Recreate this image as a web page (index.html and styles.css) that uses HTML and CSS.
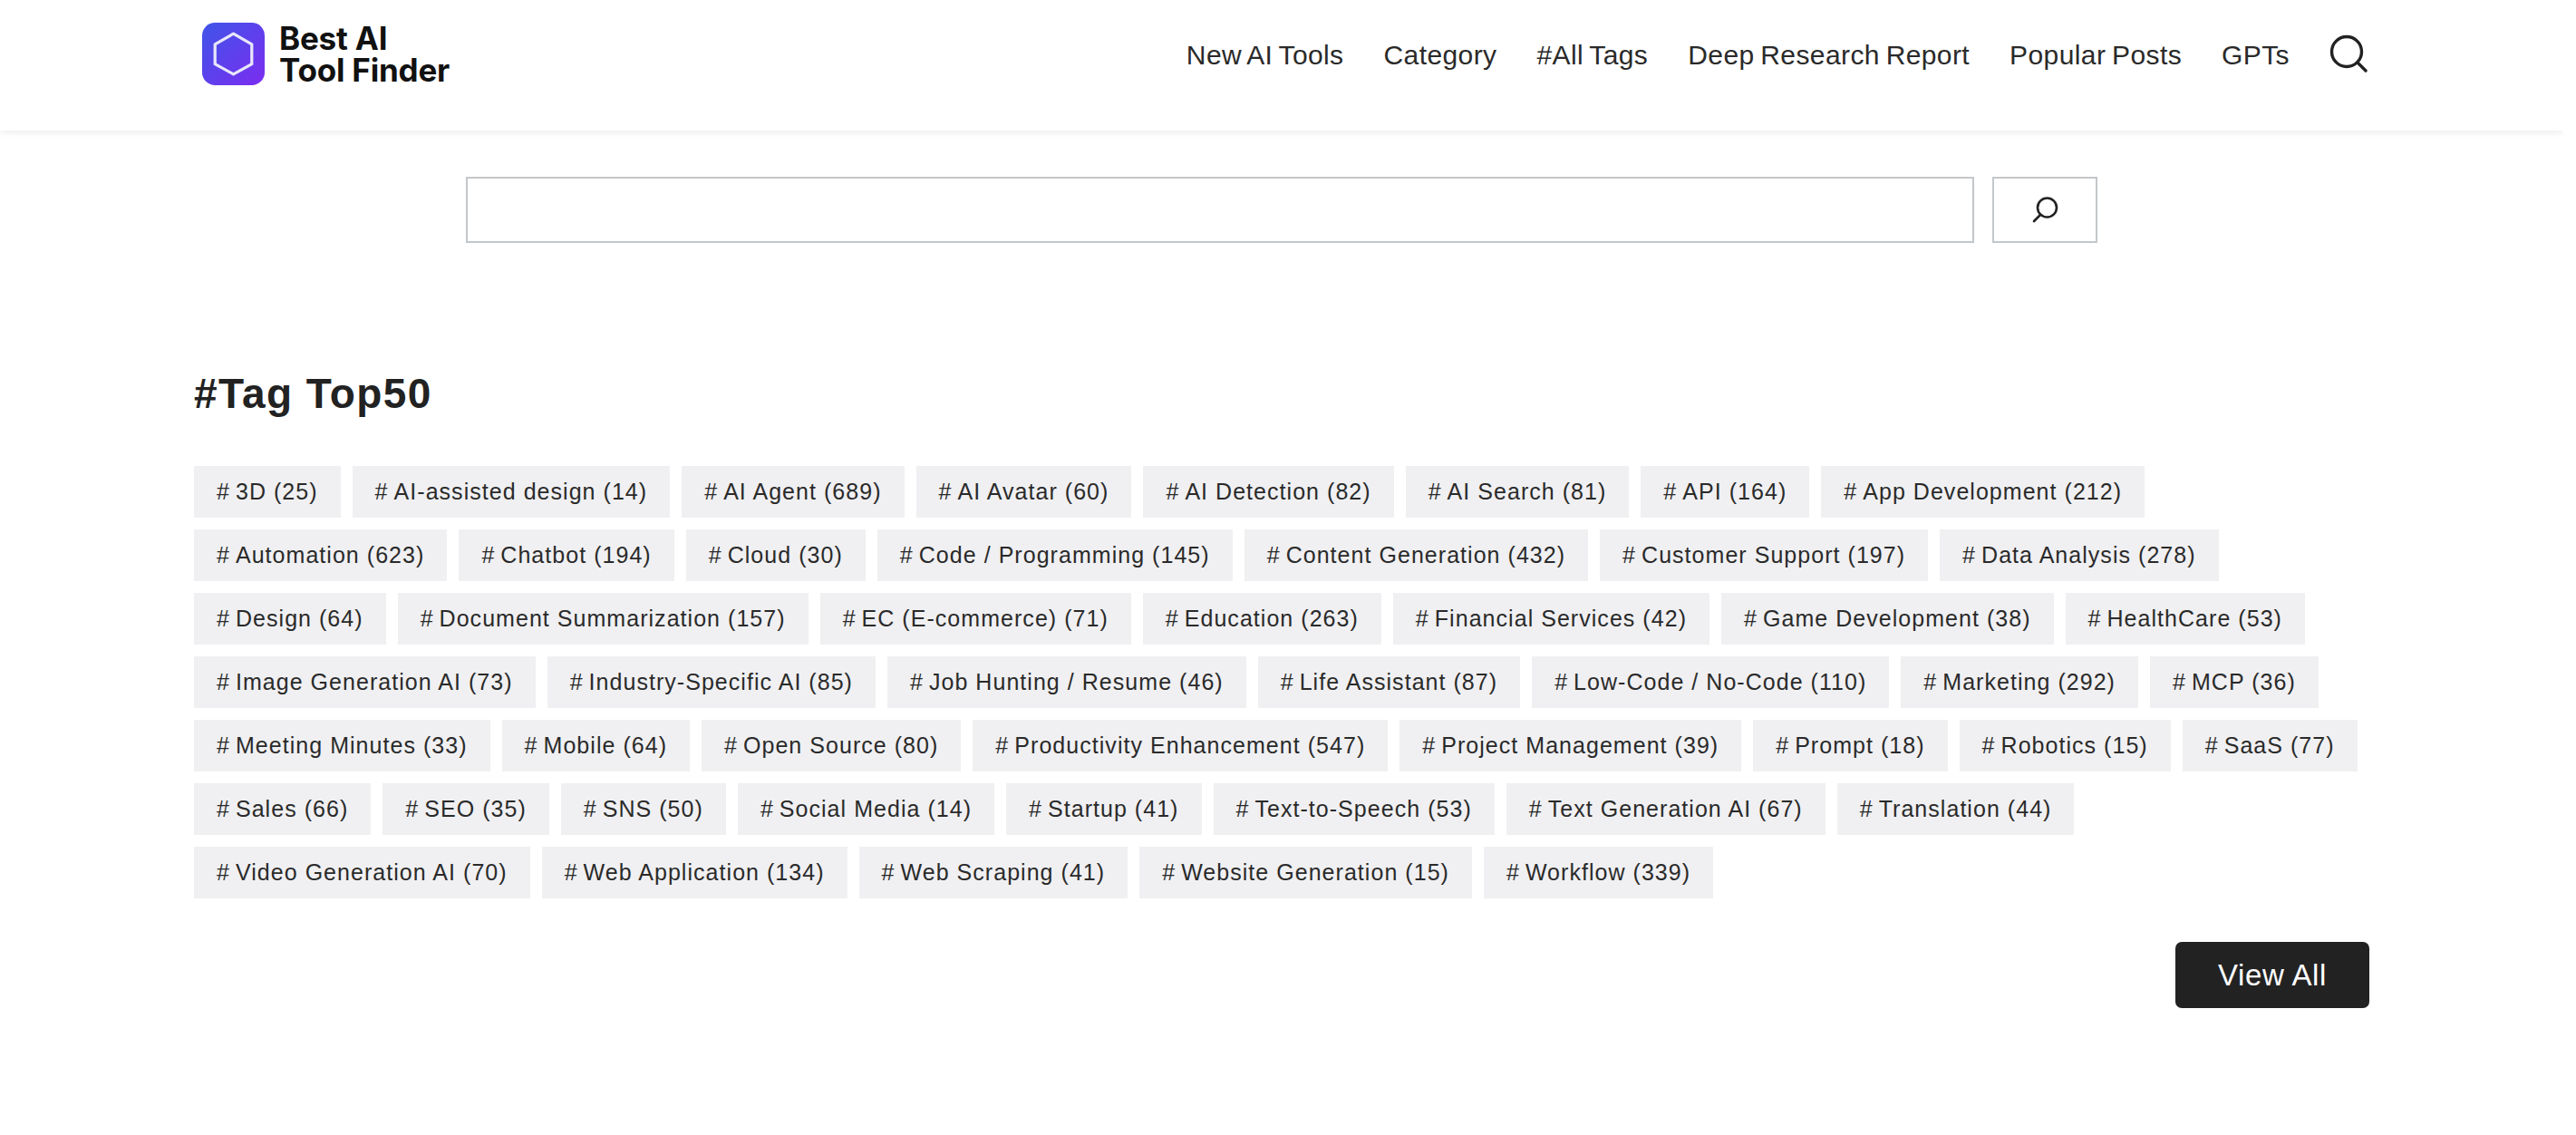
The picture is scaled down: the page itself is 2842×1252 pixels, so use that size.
FILE: index.html
```html
<!DOCTYPE html>
<html lang="en">
<head>
<meta charset="utf-8">
<title>Best AI Tool Finder</title>
<link rel="stylesheet" href="styles.css">
</head>
<body>
<header class="site-header">
  <div class="header-inner">
    <a class="logo" href="#">
      <svg class="logo-icon" viewBox="0 0 68 68" aria-hidden="true">
        <defs><linearGradient id="lg" x1="0" y1="0" x2="1" y2="1"><stop offset="0" stop-color="#3f55e8"/><stop offset="1" stop-color="#7c2cf0"/></linearGradient></defs>
        <rect width="68" height="68" rx="14" fill="url(#lg)"/>
        <path d="M34 12 L54 23.5 V45 L34 56 L14 45 V23.5 Z" fill="none" stroke="#e8e6fb" stroke-width="3.2" stroke-linejoin="round"/>
      </svg>
      <span class="logo-text">Best AI<br>Tool Finder</span>
    </a>
    <nav class="main-nav">
      <a href="#">New AI Tools</a>
      <a href="#">Category</a>
      <a href="#">#All Tags</a>
      <a href="#">Deep Research Report</a>
      <a href="#">Popular Posts</a>
      <a href="#">GPTs</a>
      <svg class="nav-search" viewBox="0 0 42 42" aria-hidden="true"><circle cx="19" cy="19" r="16.5" fill="none" stroke="#222" stroke-width="3.4"/><path d="M31 31 L40 40" stroke="#222" stroke-width="3.4" stroke-linecap="round"/></svg>
    </nav>
  </div>
</header>
<main class="content">
  <form class="search-form">
    <input class="search-input" type="text" aria-label="Search">
    <button class="search-btn" type="button" aria-label="Search">
      <svg viewBox="0 0 30 30" class="search-btn-icon" aria-hidden="true"><circle cx="17.5" cy="12" r="10.5" fill="none" stroke="#222" stroke-width="2.6"/><path d="M10 20 L3 27" stroke="#222" stroke-width="2.6" stroke-linecap="round"/></svg>
    </button>
  </form>
  <section class="tags-section">
    <h2 class="section-title">#Tag Top50</h2>
    <ul class="tag-list">
      <li class="tag"><span class="hash">#</span>3D (25)</li>
      <li class="tag"><span class="hash">#</span>AI-assisted design (14)</li>
      <li class="tag"><span class="hash">#</span>AI Agent (689)</li>
      <li class="tag"><span class="hash">#</span>AI Avatar (60)</li>
      <li class="tag"><span class="hash">#</span>AI Detection (82)</li>
      <li class="tag"><span class="hash">#</span>AI Search (81)</li>
      <li class="tag"><span class="hash">#</span>API (164)</li>
      <li class="tag"><span class="hash">#</span>App Development (212)</li>
      <li class="tag"><span class="hash">#</span>Automation (623)</li>
      <li class="tag"><span class="hash">#</span>Chatbot (194)</li>
      <li class="tag"><span class="hash">#</span>Cloud (30)</li>
      <li class="tag"><span class="hash">#</span>Code / Programming (145)</li>
      <li class="tag"><span class="hash">#</span>Content Generation (432)</li>
      <li class="tag"><span class="hash">#</span>Customer Support (197)</li>
      <li class="tag"><span class="hash">#</span>Data Analysis (278)</li>
      <li class="tag"><span class="hash">#</span>Design (64)</li>
      <li class="tag"><span class="hash">#</span>Document Summarization (157)</li>
      <li class="tag"><span class="hash">#</span>EC (E-commerce) (71)</li>
      <li class="tag"><span class="hash">#</span>Education (263)</li>
      <li class="tag"><span class="hash">#</span>Financial Services (42)</li>
      <li class="tag"><span class="hash">#</span>Game Development (38)</li>
      <li class="tag"><span class="hash">#</span>HealthCare (53)</li>
      <li class="tag"><span class="hash">#</span>Image Generation AI (73)</li>
      <li class="tag"><span class="hash">#</span>Industry-Specific AI (85)</li>
      <li class="tag"><span class="hash">#</span>Job Hunting / Resume (46)</li>
      <li class="tag"><span class="hash">#</span>Life Assistant (87)</li>
      <li class="tag"><span class="hash">#</span>Low-Code / No-Code (110)</li>
      <li class="tag"><span class="hash">#</span>Marketing (292)</li>
      <li class="tag"><span class="hash">#</span>MCP (36)</li>
      <li class="tag"><span class="hash">#</span>Meeting Minutes (33)</li>
      <li class="tag"><span class="hash">#</span>Mobile (64)</li>
      <li class="tag"><span class="hash">#</span>Open Source (80)</li>
      <li class="tag"><span class="hash">#</span>Productivity Enhancement (547)</li>
      <li class="tag"><span class="hash">#</span>Project Management (39)</li>
      <li class="tag"><span class="hash">#</span>Prompt (18)</li>
      <li class="tag"><span class="hash">#</span>Robotics (15)</li>
      <li class="tag"><span class="hash">#</span>SaaS (77)</li>
      <li class="tag"><span class="hash">#</span>Sales (66)</li>
      <li class="tag"><span class="hash">#</span>SEO (35)</li>
      <li class="tag"><span class="hash">#</span>SNS (50)</li>
      <li class="tag"><span class="hash">#</span>Social Media (14)</li>
      <li class="tag"><span class="hash">#</span>Startup (41)</li>
      <li class="tag"><span class="hash">#</span>Text-to-Speech (53)</li>
      <li class="tag"><span class="hash">#</span>Text Generation AI (67)</li>
      <li class="tag"><span class="hash">#</span>Translation (44)</li>
      <li class="tag"><span class="hash">#</span>Video Generation AI (70)</li>
      <li class="tag"><span class="hash">#</span>Web Application (134)</li>
      <li class="tag"><span class="hash">#</span>Web Scraping (41)</li>
      <li class="tag"><span class="hash">#</span>Website Generation (15)</li>
      <li class="tag"><span class="hash">#</span>Workflow (339)</li>
    </ul>
    <div class="view-all-row"><a class="view-all" href="#">View All</a></div>
  </section>
</main>
</body>
</html>
```
FILE: styles.css
```css
* { box-sizing: border-box; }
html, body { margin: 0; padding: 0; }
body {
  width: 2828px;
  background: #fff;
  color: #222;
  font-family: "Liberation Sans", Arial, sans-serif;
  height: 1252px;
  overflow: hidden;
}
a { color: inherit; text-decoration: none; }
.site-header {
  height: 144px;
  background: #fff;
  box-shadow: 0 2px 8px rgba(0, 0, 0, .08);
}
.header-inner {
  width: 2400px;
  margin: 0 auto;
  padding-left: 9px;
  height: 120px;
  display: flex;
  align-items: center;
  justify-content: space-between;
}
.logo { display: flex; align-items: center; gap: 16px; margin-top: -1px; }
.logo-icon { width: 69px; height: 69px; display: block; }
.logo-text {
  font-family: Inter, "Liberation Sans", sans-serif;
  font-weight: 700;
  font-size: 35px;
  line-height: 35px;
  color: #111;
  letter-spacing: -.2px;
}
.main-nav {
  display: flex;
  align-items: center;
  gap: 44px;
  font-size: 30px;
  letter-spacing: .4px;
  word-spacing: -2px;
  color: #2a2a2a;
}
.main-nav a { padding-top: 2px; }
.nav-search { width: 42px; height: 42px; display: block; margin-top: -2px; margin-right: 2px; }
.content { width: 2400px; margin: 0 auto; }
.search-form {
  display: flex;
  justify-content: center;
  gap: 20px;
  padding-top: 51px;
}
.search-input {
  width: 1664px;
  height: 73px;
  border: 2px solid #c3c7ca;
  background: #fff;
}
.search-btn {
  width: 116px;
  height: 73px;
  border: 2px solid #c3c7ca;
  background: #fff;
  display: flex;
  align-items: center;
  justify-content: center;
  padding: 0;
}
.search-btn-icon { width: 30px; height: 30px; display: block; }
.tags-section { padding-top: 136px; }
.section-title {
  margin: 0 0 50px;
  font-size: 46px;
  line-height: 60px;
  font-weight: 700;
  letter-spacing: 1.4px;
}
.tag-list {
  list-style: none;
  margin: 0;
  padding: 0;
  display: flex;
  flex-wrap: wrap;
  gap: 13px 13px;
}
.tag {
  height: 57px;
  padding: 0 25px;
  background: #f0f0f2;
  font-size: 25px;
  line-height: 57px;
  letter-spacing: 1.04px;
  white-space: pre;
  color: #2a2a2a;
}
.hash { margin-right: 6px; }
.view-all-row { display: flex; justify-content: flex-end; padding-top: 48px; }
.view-all {
  width: 214px;
  height: 73px;
  background: #222;
  color: #fff;
  border-radius: 7px;
  font-size: 33px;
  line-height: 73px;
  text-align: center;
  letter-spacing: .6px;
}
```
